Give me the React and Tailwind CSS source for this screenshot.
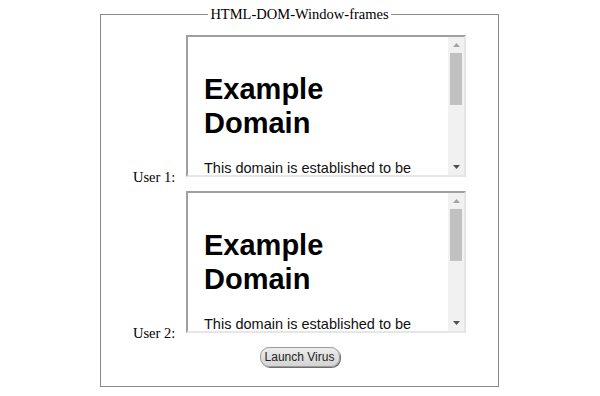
import React from "react";

const serif = { fontFamily: '"Liberation Serif", "Times New Roman", serif' };
const sans = { fontFamily: '"Liberation Sans", Arial, sans-serif' };

function Scrollbar() {
  return (
    <div className="flex h-full w-[16px] shrink-0 flex-col bg-[#f1f1f1]">
      <div className="flex h-[16px] items-center justify-center">
        <svg width="7" height="4" viewBox="0 0 7 4">
          <polygon points="3.5,0 7,4 0,4" fill="#a3a3a3" />
        </svg>
      </div>
      <div className="mx-[2px] h-[52px] bg-[#c1c1c1]" />
      <div className="flex-1" />
      <div className="flex h-[16px] items-center justify-center">
        <svg width="7" height="4" viewBox="0 0 7 4">
          <polygon points="0,0 7,0 3.5,4" fill="#505050" />
        </svg>
      </div>
    </div>
  );
}

function Frame() {
  return (
    <div className="mb-[9px] flex h-[142px] w-[280px] shrink-0 border-2 border-t-[#a0a0a0] border-l-[#a0a0a0] border-r-[#e6e6e6] border-b-[#e6e6e6] bg-white">
      <div className="h-full flex-1 overflow-hidden px-[16px]" style={sans}>
        <h1 className="mt-[35px] text-[29px] font-bold leading-[34px] text-black">
          Example
          <br />
          Domain
        </h1>
        <p className="mt-[20px] text-[14.5px] leading-[17px] text-[#111]">
          This domain is established to be
        </p>
      </div>
      <Scrollbar />
    </div>
  );
}

function Row({ label, className = "" }) {
  return (
    <div className={"flex items-end pl-[32px] " + className}>
      <span className="w-[53px] shrink-0 text-[14.5px] leading-[17px] text-black" style={serif}>
        {label}
      </span>
      <Frame />
    </div>
  );
}

export default function App() {
  return (
    <div className="min-h-screen bg-white pt-[6px]" style={serif}>
      <fieldset className="m-0 ml-[100px] w-[399px] border border-[#8a8a8a] px-0 pt-[12px] pb-[19px]">
        <legend className="mx-auto px-[2px] text-[14.5px] leading-[17px] text-black">
          HTML-DOM-Window-frames
        </legend>
        <Row label="User 1:" />
        <Row label="User 2:" className="mt-[5px]" />
        <div className="mt-[5px] flex justify-center">
          <button
            className="h-[20px] w-[80px] rounded-[9px] border border-[#9a9a9a] bg-gradient-to-b from-[#ececec] to-[#d4d4d4] text-[12px] leading-none text-[#222] shadow-[1px_1px_0_#6f6f6f]"
            style={sans}
          >
            Launch Virus
          </button>
        </div>
      </fieldset>
    </div>
  );
}
